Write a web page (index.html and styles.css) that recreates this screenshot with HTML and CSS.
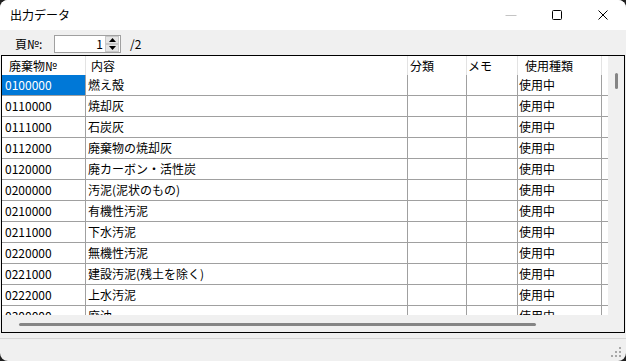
FILE: index.html
```html
<!DOCTYPE html>
<html lang="ja">

<head>
  <meta charset="UTF-8">
  <title>出力データ</title>
  <link rel="stylesheet" href="styles.css">
</head>

<body>
  <div class="window">
    <div class="titlebar">
      <span class="title">出力データ</span>
      <div class="caption-buttons">
        <div class="caption-btn disabled">
          <svg width="12" height="12" viewBox="0 0 12 12"><path d="M0.5 6.5h11" stroke="#c4c4c4" stroke-width="1" /></svg>
        </div>
        <div class="caption-btn">
          <svg width="12" height="12" viewBox="0 0 12 12"><rect x="1.5" y="1.5" width="9" height="9" rx="1" fill="none" stroke="#000" stroke-width="1" /></svg>
        </div>
        <div class="caption-btn">
          <svg width="12" height="12" viewBox="0 0 12 12"><path d="M1.5 1.5l9 9M10.5 1.5l-9 9" stroke="#000" stroke-width="1" /></svg>
        </div>
      </div>
    </div>

    <div class="toolbar">
      <span class="page-label">頁№:</span>
      <div class="spin">
        <span class="spin-value">1</span>
        <div class="spin-buttons">
          <div class="spin-btn">
            <svg width="7" height="4" viewBox="0 0 7 4"><path d="M3.5 0L7 4H0z" fill="#000" /></svg>
          </div>
          <div class="spin-btn">
            <svg width="7" height="4" viewBox="0 0 7 4"><path d="M0 0h7L3.5 4z" fill="#000" /></svg>
          </div>
        </div>
      </div>
      <span class="page-total">/2</span>
    </div>

    <div class="grid-frame">
      <div class="grid-body">
        <div class="grid-view">
          <div class="grid-row grid-header">
            <div class="cell c1">廃棄物№</div>
            <div class="cell c2">内容</div>
            <div class="cell c3">分類</div>
            <div class="cell c4">メモ</div>
            <div class="cell c5">使用種類</div>
            <div class="cell c6"></div>
          </div>
          <div class="grid-row">
            <div class="cell c1 selected">0100000</div>
            <div class="cell c2">燃え殻</div>
            <div class="cell c3"></div>
            <div class="cell c4"></div>
            <div class="cell c5">使用中</div>
            <div class="cell c6"></div>
          </div>
          <div class="grid-row">
            <div class="cell c1">0110000</div>
            <div class="cell c2">焼却灰</div>
            <div class="cell c3"></div>
            <div class="cell c4"></div>
            <div class="cell c5">使用中</div>
            <div class="cell c6"></div>
          </div>
          <div class="grid-row">
            <div class="cell c1">0111000</div>
            <div class="cell c2">石炭灰</div>
            <div class="cell c3"></div>
            <div class="cell c4"></div>
            <div class="cell c5">使用中</div>
            <div class="cell c6"></div>
          </div>
          <div class="grid-row">
            <div class="cell c1">0112000</div>
            <div class="cell c2">廃棄物の焼却灰</div>
            <div class="cell c3"></div>
            <div class="cell c4"></div>
            <div class="cell c5">使用中</div>
            <div class="cell c6"></div>
          </div>
          <div class="grid-row">
            <div class="cell c1">0120000</div>
            <div class="cell c2">廃カーボン・活性炭</div>
            <div class="cell c3"></div>
            <div class="cell c4"></div>
            <div class="cell c5">使用中</div>
            <div class="cell c6"></div>
          </div>
          <div class="grid-row">
            <div class="cell c1">0200000</div>
            <div class="cell c2">汚泥(泥状のもの)</div>
            <div class="cell c3"></div>
            <div class="cell c4"></div>
            <div class="cell c5">使用中</div>
            <div class="cell c6"></div>
          </div>
          <div class="grid-row">
            <div class="cell c1">0210000</div>
            <div class="cell c2">有機性汚泥</div>
            <div class="cell c3"></div>
            <div class="cell c4"></div>
            <div class="cell c5">使用中</div>
            <div class="cell c6"></div>
          </div>
          <div class="grid-row">
            <div class="cell c1">0211000</div>
            <div class="cell c2">下水汚泥</div>
            <div class="cell c3"></div>
            <div class="cell c4"></div>
            <div class="cell c5">使用中</div>
            <div class="cell c6"></div>
          </div>
          <div class="grid-row">
            <div class="cell c1">0220000</div>
            <div class="cell c2">無機性汚泥</div>
            <div class="cell c3"></div>
            <div class="cell c4"></div>
            <div class="cell c5">使用中</div>
            <div class="cell c6"></div>
          </div>
          <div class="grid-row">
            <div class="cell c1">0221000</div>
            <div class="cell c2">建設汚泥(残土を除く)</div>
            <div class="cell c3"></div>
            <div class="cell c4"></div>
            <div class="cell c5">使用中</div>
            <div class="cell c6"></div>
          </div>
          <div class="grid-row">
            <div class="cell c1">0222000</div>
            <div class="cell c2">上水汚泥</div>
            <div class="cell c3"></div>
            <div class="cell c4"></div>
            <div class="cell c5">使用中</div>
            <div class="cell c6"></div>
          </div>
          <div class="grid-row">
            <div class="cell c1">0300000</div>
            <div class="cell c2">廃油</div>
            <div class="cell c3"></div>
            <div class="cell c4"></div>
            <div class="cell c5">使用中</div>
            <div class="cell c6"></div>
          </div>
        </div>
        <div class="vscroll">
          <div class="vthumb"></div>
        </div>
      </div>
      <div class="hscroll">
        <div class="hthumb"></div>
      </div>
    </div>

    <div class="statusbar">
      <div class="status-line"></div>
      <svg class="grip" width="11" height="11" viewBox="0 0 11 11">
        <rect x="8" y="0" width="2" height="2" fill="#a8a8a8" />
        <rect x="4" y="4" width="2" height="2" fill="#a8a8a8" />
        <rect x="8" y="4" width="2" height="2" fill="#a8a8a8" />
        <rect x="0" y="8" width="2" height="2" fill="#a8a8a8" />
        <rect x="4" y="8" width="2" height="2" fill="#a8a8a8" />
        <rect x="8" y="8" width="2" height="2" fill="#a8a8a8" />
      </svg>
    </div>
  </div>
</body>

</html>
```

FILE: styles.css
```css
body {
  margin: 0;
  background-color: #202020;
  font-family: 'Noto Sans CJK JP', 'Noto Sans', sans-serif;
  font-size: 12px;
  color: #000;
}

.window {
  position: relative;
  width: 626px;
  height: 361px;
  background-color: #f0f0f0;
  border-radius: 8px;
  overflow: hidden;
  display: flex;
  flex-direction: column;
}

/* タイトルバー */
.titlebar {
  height: 30px;
  background-color: #fff;
  display: flex;
  align-items: center;
  flex-shrink: 0;
}

.title {
  padding-left: 10px;
  flex: 1;
  line-height: 30px;
}

.caption-buttons {
  display: flex;
  height: 30px;
}

.caption-btn {
  width: 46px;
  height: 30px;
  display: flex;
  align-items: center;
  justify-content: center;
}

/* ページ指定 */
.toolbar {
  height: 25px;
  display: flex;
  align-items: center;
  flex-shrink: 0;
}

.page-label {
  flex: 0 0 54px;
  padding-left: 15px;
  box-sizing: border-box;
  white-space: nowrap;
  margin-top: 2px;
}

.spin {
  width: 67px;
  height: 18px;
  box-sizing: border-box;
  border: 1px solid #a0a0a0;
  background-color: #fff;
  display: flex;
  align-items: center;
  justify-content: flex-end;
  margin-top: 3px;
}

.spin-value {
  padding-right: 2px;
  line-height: 16px;
}

.spin-buttons {
  width: 14px;
  height: 16px;
  display: flex;
  flex-direction: column;
  margin-right: 1px;
}

.spin-btn {
  flex: 1;
  background-color: #e5e5e5;
  border: 1px solid #c8c8c8;
  display: flex;
  align-items: center;
  justify-content: center;
}

.page-total {
  margin-left: 9px;
  margin-top: 2px;
}

/* 一覧 */
.grid-frame {
  height: 278px;
  margin: 0 1px;
  border: 1px solid #000;
  box-sizing: border-box;
  display: flex;
  flex-direction: column;
  flex-shrink: 0;
}

.grid-body {
  height: 259px;
  display: flex;
  overflow: hidden;
}

.grid-view {
  width: 606px;
  background-color: #fff;
  overflow: hidden;
}

.grid-row {
  display: grid;
  grid-template-columns: 84px 322px 59px 51px 84px 6px;
  height: 21px;
  border-bottom: 1px solid #a0a0a0;
  box-sizing: border-box;
}

.grid-header {
  height: 19px;
  border-bottom: none;
}

.cell {
  border-right: 1px solid #a0a0a0;
  line-height: 20px;
  white-space: nowrap;
  overflow: hidden;
  padding-left: 2px;
}

.grid-header .cell {
  border-right-color: #e3e3e3;
  line-height: 19px;
}

.cell.c6 {
  border-right: none;
}

.c1 {
  padding-left: 3px;
}

.grid-header .c1 {
  padding-left: 7px;
}

.grid-header .c2 {
  padding-left: 5px;
}

.grid-header .c3 {
  padding-left: 2px;
}

.grid-header .c4 {
  padding-left: 1px;
}

.grid-header .c5 {
  padding-left: 7px;
}

.c5 {
  padding-left: 1px;
}

.cell.selected {
  background-color: #0078d7;
  color: #fff;
}

.vscroll {
  flex: 1;
  background-color: #f0f0f0;
  display: flex;
  justify-content: center;
}

.vthumb {
  width: 3px;
  height: 16px;
  margin-top: 17px;
  background-color: #858585;
  border-radius: 2px;
}

.hscroll {
  flex: 1;
  background-color: #f0f0f0;
}

.hthumb {
  width: 517px;
  height: 3px;
  margin-top: 8px;
  margin-left: 17px;
  background-color: #858585;
  border-radius: 2px;
}

/* ステータスバー */
.statusbar {
  flex: 1;
  position: relative;
}

.status-line {
  margin-top: 5px;
  height: 1px;
  background-color: #d6d6d6;
}

.grip {
  position: absolute;
  right: 4px;
  bottom: 3px;
}
```
